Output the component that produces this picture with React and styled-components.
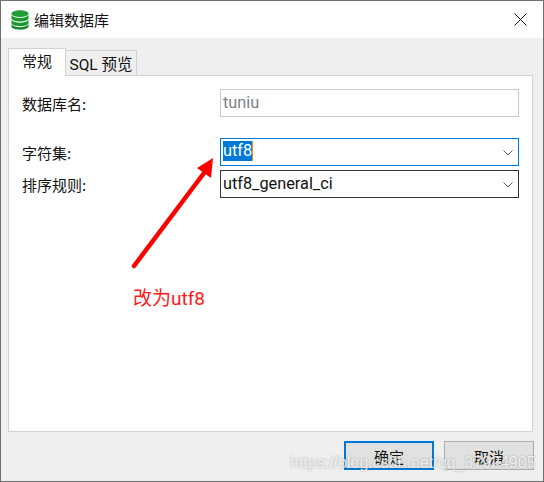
import React from "react";
import styled, { createGlobalStyle } from "styled-components";

const GlobalStyle = createGlobalStyle`
  html, body {
    margin: 0;
    padding: 0;
    background: #efefef;
  }
  * {
    box-sizing: border-box;
  }
`;

const DbIcon = () => (
  <svg width="18" height="20" viewBox="0 0 20 22" preserveAspectRatio="none">
    <ellipse cx="10" cy="4" rx="9.500" ry="3.800" fill="#1f9e36" />
    <path d="M.5 5.500c1.500 2.400 5.500 3.200 9.500 3.200s8-.8 9.500-3.200V9c0 2-4.200 3.600-9.500 3.600S.5 11 .5 9z" fill="#1c9a30" />
    <path d="M.5 10.800c1.500 2.400 5.500 3.200 9.500 3.200s8-.8 9.500-3.200v3.600c0 2-4.200 3.500-9.500 3.500S.5 16.400.5 14.400z" fill="#1c962f" />
    <path d="M.5 15.800c1.500 2.300 5.500 3.100 9.500 3.100s8-.8 9.500-3.100v2.300c0 2-4.200 3.500-9.500 3.500S.5 20.100.5 18.100z" fill="#14842a" />
  </svg>
);

const Chevron = () => (
  <svg width="10" height="6" viewBox="0 0 10 6">
    <path d="M0.500 0.500L5 5L9.500 0.500" fill="none" stroke="#555" strokeWidth="1" />
  </svg>
);

const App = () => (
  <Window>
    <GlobalStyle />
    <TitleBar>
      <DbIcon />
      <Title>编辑数据库</Title>
      <CloseIcon width="13" height="13" viewBox="0 0 13 13">
        <path d="M0.500 0.500L12.500 12.500M12.500 0.500L0.500 12.500" stroke="#111" strokeWidth="1" />
      </CloseIcon>
    </TitleBar>
    <Body>
      <Tabs>
        <Tab $active>常规</Tab>
        <Tab>SQL 预览</Tab>
      </Tabs>
      <Panel>
        <Row>
          <Label>数据库名:</Label>
          <Field $border="#c9c9c9" $color="#7a8088">tuniu</Field>
        </Row>
        <Row $top={21}>
          <Label>字符集:</Label>
          <Field $border="#0078d7">
            <Selected>utf8</Selected>
            <Caret />
            <ChevronSlot><Chevron /></ChevronSlot>
          </Field>
        </Row>
        <Row $top={4}>
          <Label>排序规则:</Label>
          <Field $border="#333333">
            utf8_general_ci
            <ChevronSlot><Chevron /></ChevronSlot>
          </Field>
        </Row>
      </Panel>
      <Footer>
        <Button $primary>确定</Button>
        <Button>取消</Button>
      </Footer>
    </Body>
    <ArrowOverlay width="544" height="482" viewBox="0 0 544 482">
      <path d="M134 266L204 173" stroke="#fe0000" strokeWidth="4.500" strokeLinecap="round" />
      <path d="M213 158L197 168L211 178z" fill="#fe0000" />
    </ArrowOverlay>
    <Note>改为utf8</Note>
    <Watermark>https://blog.csdn.net/qq_37924905</Watermark>
  </Window>
);

export default App;

const Window = styled.div`
  position: relative;
  width: 544px;
  height: 482px;
  overflow: hidden;
  display: flex;
  flex-direction: column;
  background: #efefef;
  border: 1px solid #6f6f6f;
  font-family: "Roboto", "Noto Sans CJK SC", sans-serif;
  font-size: 15px;
  color: #111;
`;

const TitleBar = styled.div`
  height: 37px;
  flex: none;
  display: flex;
  align-items: center;
  gap: 5px;
  padding: 0 16px 0 10px;
  background: #fff;
`;

const Title = styled.div`
  flex: 1;
  font-family: "Noto Sans CJK SC", sans-serif;
  font-size: 15px;
`;

const CloseIcon = styled.svg`
  flex: none;
`;

const Body = styled.div`
  flex: 1;
  display: flex;
  flex-direction: column;
  padding: 10px 9px 10px 7px;
`;

const Tabs = styled.div`
  display: flex;
  align-items: flex-end;
  height: 28px;
  position: relative;
  z-index: 1;
  margin-bottom: -1px;
`;

const Tab = styled.div`
  height: ${(p) => (p.$active ? "28px" : "26px")};
  width: ${(p) => (p.$active ? "58px" : "72px")};
  margin-left: ${(p) => (p.$active ? "0" : "-1px")};
  display: flex;
  align-items: center;
  justify-content: center;
  padding-bottom: ${(p) => (p.$active ? "5px" : "0")};
  font-size: ${(p) => (p.$active ? "15px" : "15.500px")};
  background: ${(p) => (p.$active ? "#fff" : "#efefef")};
  border: 1px solid #d2d2d2;
  border-bottom: ${(p) => (p.$active ? "none" : "1px solid #d2d2d2")};
`;

const Panel = styled.div`
  width: 525px;
  height: 357px;
  flex: none;
  padding: 13px 13px 0 13px;
  background: #fff;
  border: 1px solid #d2d2d2;
`;

const Row = styled.div`
  display: flex;
  align-items: center;
  margin-top: ${(p) => p.$top || 0}px;
`;

const Label = styled.div`
  width: 198px;
  flex: none;
  font-family: "Noto Sans CJK SC", sans-serif;
  font-size: 15px;
`;

const Field = styled.div`
  position: relative;
  width: 299px;
  height: 28px;
  flex: none;
  display: flex;
  align-items: center;
  padding: 0 0 2px 2px;
  border: 1px solid ${(p) => p.$border};
  color: ${(p) => p.$color || "#111"};
  font-size: 16.300px;
`;

const Selected = styled.span`
  background: #0078d7;
  color: #fff;
  line-height: 20px;
`;

const Caret = styled.span`
  width: 1px;
  height: 20px;
  background: #f08a24;
`;

const ChevronSlot = styled.span`
  position: absolute;
  right: 5px;
  top: 11px;
  display: flex;
`;

const Footer = styled.div`
  display: flex;
  justify-content: flex-end;
  gap: 10px;
  margin-top: 9px;
`;

const Button = styled.div`
  width: 90px;
  height: 29px;
  display: flex;
  align-items: center;
  justify-content: center;
  padding-top: 1px;
  background: #e1e1e1;
  border: ${(p) => (p.$primary ? "2px solid #0078d7" : "1px solid #adadad")};
  font-family: "Noto Sans CJK SC", sans-serif;
  font-size: 15px;
`;

const ArrowOverlay = styled.svg`
  position: absolute;
  left: -1px;
  top: -1px;
  pointer-events: none;
`;

const Note = styled.div`
  position: absolute;
  left: 132px;
  top: 282px;
  font-size: 19px;
  color: #fe1a1a;
`;

const Watermark = styled.div`
  position: absolute;
  left: 289px;
  top: 453px;
  white-space: nowrap;
  font-family: "Liberation Sans", sans-serif;
  font-size: 16px;
  color: rgba(255, 255, 255, 0.8);
  text-shadow: 0 0 2px rgba(90, 90, 90, 0.55);
`;
